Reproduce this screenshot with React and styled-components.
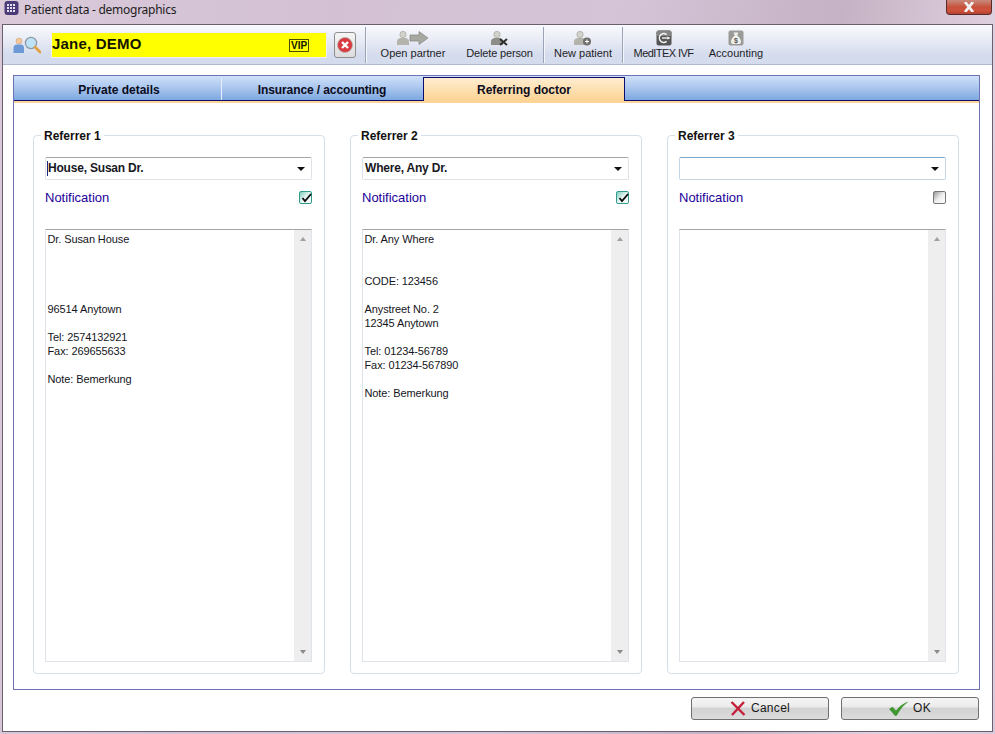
import styled, { createGlobalStyle } from "styled-components";

const GlobalStyle = createGlobalStyle`
  html, body {
    margin: 0;
    height: 100%;
    overflow: hidden;
  }
  body {
    background: linear-gradient(100deg, #d9c9d9 0%, #d3c1d3 30%, #d5c4d8 55%, #c5b2c4 75%, #e1d2e1 90%, #d9cadb 100%);
    font-family: "Liberation Sans", Arial, sans-serif;
  }
`;

const Frame = styled.div`
  width: 995px;
  height: 734px;
  display: flex;
  flex-direction: column;
  box-sizing: border-box;
  padding: 0 2px 2px 2px;
`;

const TitleBar = styled.div`
  height: 24px;
  flex: none;
  display: flex;
  align-items: flex-start;
  margin-left: 2px;
`;

const TitleText = styled.span`
  font-family: "Noto Sans", sans-serif;
  font-size: 12px;
  letter-spacing: -0.26px;
  line-height: 19px;
  margin-left: 4px;
  color: #1c1c22;
`;

const CloseBox = styled.div`
  margin-left: auto;
  width: 46px;
  height: 15px;
  margin-right: 1px;
  box-sizing: border-box;
  border: 1px solid #5b2a2a;
  border-top: none;
  border-radius: 0 0 4px 4px;
  background: linear-gradient(#c98a7c 0%, #c6523c 50%, #d0503a 75%, #b04434 100%);
  display: flex;
  align-items: center;
  justify-content: center;
`;

const Client = styled.div`
  flex: 1;
  display: flex;
  flex-direction: column;
  background: #fff;
  border: 1px solid #6a5f6c;
  min-height: 0;
`;

const Toolbar = styled.div`
  height: 40px;
  flex: none;
  box-sizing: border-box;
  display: flex;
  align-items: center;
  background: linear-gradient(#f9fafd 0%, #e6e9f4 45%, #d5dced 75%, #d4dbec 100%);
  border-bottom: 1px solid #b3bad0;
`;

const SearchSlot = styled.div`
  width: 48px;
  height: 26px;
  flex: none;
  display: flex;
  align-items: center;
  padding-left: 10px;
  box-sizing: border-box;
`;

const NameField = styled.div`
  width: 276px;
  height: 26px;
  flex: none;
  box-sizing: border-box;
  border: 1px solid #eef0f5;
  background: #ffff00;
  display: flex;
  align-items: center;
  justify-content: space-between;
  padding: 0 17px 2px 0;
  font-size: 15px;
  letter-spacing: 0.2px;
  font-weight: 700;
  color: #141400;
`;

const VipBadge = styled.span`
  border: 1px solid #4a4a00;
  font-size: 10px;
  font-weight: 700;
  letter-spacing: 0;
  line-height: 11px;
  padding: 0 1px;
  width: 16px;
  text-align: center;
  margin-top: 3px;
`;

const ClearButton = styled.div`
  width: 22px;
  height: 26px;
  flex: none;
  margin: 0 9px 0 7px;
  box-sizing: border-box;
  border: 1px solid #8d8d8d;
  border-radius: 3px;
  background: linear-gradient(#f6f6f6, #dcdcdc);
  display: flex;
  align-items: center;
  justify-content: center;
`;

const Sep = styled.div`
  width: 1px;
  height: 36px;
  flex: none;
  background: #9aa3b8;
  box-shadow: 1px 0 0 #f3f5fa;
`;

const ToolButton = styled.div`
  display: flex;
  flex-direction: column;
  align-items: center;
  flex: none;
  box-sizing: border-box;
  width: ${(p) => p.$w}px;
  padding-right: ${(p) => p.$pr || 0}px;
  font-size: 11px;
  letter-spacing: ${(p) => p.$ls || 0}px;
  color: #1e1e28;
  white-space: nowrap;
  line-height: 13px;

  svg {
    display: block;
    margin-bottom: 1px;
  }
`;

const Body = styled.div`
  flex: 1;
  min-height: 0;
  display: flex;
  flex-direction: column;
  padding: 10px 12px 0 10px;
`;

const TabFrame = styled.div`
  flex: none;
  height: 615px;
  box-sizing: border-box;
  border: 1px solid #6e72b2;
  display: flex;
  flex-direction: column;
`;

const TabStrip = styled.div`
  height: 25px;
  flex: none;
  box-sizing: border-box;
  display: flex;
  align-items: flex-end;
  background: linear-gradient(#d0e1f9 0%, #a9c6ee 50%, #7ea7e0 100%);
  border-bottom: 1px solid #0b0b70;
  box-shadow: 0 2px 0 #fdd49a;
`;

const Tab = styled.div`
  width: ${(p) => p.$w}px;
  flex: none;
  box-sizing: border-box;
  display: flex;
  align-items: center;
  justify-content: center;
  padding: ${(p) => (p.$active ? "0" : p.$last ? "2px 0 0 0" : "2px 0 0 3px")};
  font-size: 12px;
  letter-spacing: ${(p) => (p.$last ? "-0.1px" : "0")};
  font-weight: 700;
  color: #0c0c20;
  height: ${(p) => (p.$active ? "24px" : "22px")};
  border-right: 1px solid ${(p) => (p.$active ? "#0b0b70" : p.$last ? "transparent" : "#e6effb")};
  border-left: ${(p) => (p.$active ? "1px solid #0b0b70" : "none")};
  border-top: ${(p) => (p.$active ? "1px solid #0b0b70" : "none")};
  margin-bottom: ${(p) => (p.$active ? "-1px" : "0")};
  background: ${(p) => (p.$active ? "linear-gradient(#ffedd0, #fdd393)" : "transparent")};
  position: relative;
`;

const Panels = styled.div`
  flex: 1;
  min-height: 0;
  display: flex;
  gap: 25px;
  padding: 26px 19px 15px 19px;
`;

const Group = styled.fieldset`
  width: 292px;
  flex: none;
  margin: 0;
  padding: 14px 12px 11px 11px;
  box-sizing: border-box;
  border: 1px solid #d6e0ea;
  border-radius: 4px;
  display: flex;
  flex-direction: column;
  min-width: 0;

  legend {
    font-size: 12px;
    font-weight: 700;
    color: #111;
    padding: 2px 3px 0;
    margin-left: -4px;
    line-height: 14px;
  }
`;

const Combo = styled.div`
  height: 23px;
  flex: none;
  box-sizing: border-box;
  border: 1px solid ${(p) => (p.$empty ? "#c4d6e6" : "#dfe3e8")};
  border-top-color: ${(p) => (p.$empty ? "#7da7c9" : "#a6a6a6")};
  border-radius: 2px;
  display: flex;
  align-items: center;
  justify-content: space-between;
  padding: 0 6px 0 2px;
  font-size: 12px;
  letter-spacing: -0.2px;
  font-weight: 700;
  color: #18181f;
`;

const ComboText = styled.span`
  line-height: 15px;
  box-shadow: ${(p) => (p.$focus ? "-1px 0 0 #1a2a80" : "none")};
`;

const Caret = styled.span`
  width: 0;
  height: 0;
  border-left: 4px solid transparent;
  border-right: 4px solid transparent;
  border-top: 4px solid #111;
`;

const NotifyRow = styled.div`
  height: 35px;
  flex: none;
  display: flex;
  align-items: center;
  justify-content: space-between;
  font-size: 13px;
  color: #22009a;
  margin-bottom: 12px;
  padding: 0 0 2px 0;
`;

const Check = styled.div`
  width: 13px;
  height: 13px;
  box-sizing: border-box;
  border: 1px solid ${(p) => (p.$on ? "#2f9c8c" : "#777")};
  border-radius: 2px;
  background: ${(p) =>
    p.$on
      ? "linear-gradient(135deg, #7fcdbb 0%, #e8f6f2 50%, #fff 100%)"
      : "linear-gradient(135deg, #999 0%, #eee 50%, #fff 100%)"};
  position: relative;

  svg {
    position: absolute;
    left: 0;
    top: -1px;
  }
`;

const Memo = styled.div`
  flex: 1;
  min-height: 0;
  box-sizing: border-box;
  border: 1px solid #dfe4ea;
  border-top-color: #a4a4a4;
  display: flex;
`;

const MemoText = styled.div`
  flex: 1;
  padding: 2px 1.5px;
  font-size: 11px;
  letter-spacing: -0.1px;
  line-height: 14px;
  color: #15151c;
  white-space: pre-line;
`;

const ScrollBar = styled.div`
  width: 17px;
  flex: none;
  background: #eeeeee;
  display: flex;
  flex-direction: column;
  align-items: center;
  justify-content: space-between;
  padding: 7px 0;
  box-sizing: border-box;
`;

const ScrollArrow = styled.span`
  width: 0;
  height: 0;
  border-left: 3.5px solid transparent;
  border-right: 3.5px solid transparent;
  ${(p) => (p.$up ? "border-bottom: 4px solid #a0a0a0;" : "border-top: 4px solid #8a8a8a;")}
`;

const Footer = styled.div`
  flex: 1;
  display: flex;
  justify-content: flex-end;
  gap: 12px;
  padding: 7px 1px 0 0;
`;

const DlgButton = styled.div`
  width: 138px;
  height: 23px;
  box-sizing: border-box;
  border: 1px solid #6f6f6f;
  border-radius: 3px;
  background: linear-gradient(#f5f5f5 0%, #ececec 40%, #d2d2d2 50%, #dcdcdc 100%);
  display: flex;
  align-items: center;
  justify-content: center;
  gap: 5px;
  padding-bottom: 1px;
  font-size: 12px;
  letter-spacing: 0.3px;
  color: #1a1a1a;
`;

const Person = ({ x = 0, y = 0, fill = "#b4b4ac" }) => (
  <g transform={`translate(${x} ${y})`}>
    <circle cx="6" cy="3.5" r="3.2" fill="#d2d2ca" stroke="#94948c" strokeWidth="0.5" />
    <path d="M0 14 V10.5 Q0 7.5 3.5 7 H8.5 Q12 7.5 12 10.5 V14 Z" fill={fill} />
  </g>
);

const OpenPartnerIcon = () => (
  <svg width="32" height="16" viewBox="0 0 32 16">
    <Person y="1" />
    <path d="M13 5 H22 V1.5 L31 8 L22 14.5 V11 H13 Z" fill="#a8a8a2" stroke="#85857e" strokeWidth="0.7" />
  </svg>
);

const DeletePersonIcon = () => (
  <svg width="18" height="16" viewBox="0 0 18 16">
    <Person y="1" fill="#8e8e88" />
    <path d="M9 9 L16 15 M16 9 L9 15" stroke="#2f2f2f" strokeWidth="2" />
  </svg>
);

const NewPatientIcon = () => (
  <svg width="18" height="16" viewBox="0 0 18 16">
    <Person y="1" />
    <circle cx="13" cy="11.5" r="4" fill="#6f6f6b" />
    <path d="M13 9.5 V13.5 M11 11.5 H15" stroke="#fff" strokeWidth="1" />
  </svg>
);

const MeditexIcon = () => (
  <svg width="16" height="16" viewBox="0 0 16 16">
    <rect x="0.5" y="0.5" width="15" height="15" rx="2" fill="#555" />
    <path d="M0.5 6 H15.5 V2.5 Q15.5 0.5 13.5 0.5 H2.5 Q0.5 0.5 0.5 2.5 Z" fill="#858585" />
    <path d="M10.6 4.6 A4.4 4.4 0 1 0 10.6 11.4" fill="none" stroke="#f4f4f4" strokeWidth="1.5" />
    <path d="M6 8 H13.5" stroke="#f4f4f4" strokeWidth="1.4" />
    <path d="M11.5 6.2 L14 8 L11.5 9.8 Z" fill="#f4f4f4" />
  </svg>
);

const AccountingIcon = () => (
  <svg width="16" height="16" viewBox="0 0 16 16">
    <rect x="0.5" y="0.5" width="15" height="15" rx="2" fill="#9a9a96" />
    <path d="M5.5 2.5 H10.5 L9.2 5.5 Q13 8.5 13 12 Q13 14 11 14 H5 Q3 14 3 12 Q3 8.5 6.8 5.5 Z" fill="#f0f0ec" />
    <text x="8" y="12.5" fontSize="7" fontWeight="700" textAnchor="middle" fill="#555" fontFamily="Liberation Sans">$</text>
  </svg>
);

const AppIcon = () => (
  <svg width="16" height="16" viewBox="0 0 16 16">
    <rect x="0.5" y="1" width="14" height="14" rx="3" fill="#4b3a78" />
    {[4, 7, 10].map((x) =>
      [5, 8, 11].map((y) => <rect key={`${x}-${y}`} x={x - 1} y={y - 1} width="2" height="2" fill="#e6e0f0" />)
    )}
  </svg>
);

const SearchIcon = () => (
  <svg width="28" height="18" viewBox="0 0 28 18">
    <circle cx="6" cy="5" r="3" fill="#f3c79a" stroke="#c79a70" strokeWidth="0.5" />
    <path d="M0.5 17 V12 Q0.5 8.5 4 8.5 H8 Q11 8.5 11 12 V17 Z" fill="#6d9ad6" />
    <circle cx="18" cy="7" r="5.6" fill="#bfe3f6" stroke="#8d9aa4" strokeWidth="1.3" />
    <path d="M22 11 L27 16" stroke="#e0a040" strokeWidth="2.6" strokeLinecap="round" />
  </svg>
);

const ClearIcon = () => (
  <svg width="16" height="16" viewBox="0 0 16 16">
    <circle cx="8" cy="8" r="7.5" fill="#d93a3f" stroke="#b8b0b0" strokeWidth="0.8" />
    <path d="M5 5 L11 11 M11 5 L5 11" stroke="#fff" strokeWidth="2.4" />
  </svg>
);

const CancelIcon = () => (
  <svg width="16" height="15" viewBox="0 0 16 15">
    <path d="M1.5 1 L14.5 14 M14 1 L2 14" stroke="#c4203a" strokeWidth="2.4" />
  </svg>
);

const OkIcon = () => (
  <svg width="19" height="15" viewBox="0 0 19 15">
    <path d="M0.5 8 L3.5 6 L7 10 Q11 4 18.5 1 Q12 6 7.5 14.5 H6 Z" fill="#3b9a2a" stroke="#2d7a20" strokeWidth="0.4" />
  </svg>
);

const WhiteX = () => (
  <svg width="12" height="10" viewBox="0 0 12 10">
    <path d="M2 0 L10 10 M10 0 L2 10" stroke="#f2f2f2" strokeWidth="2.8" fill="none" />
  </svg>
);

const referrers = [
  {
    title: "Referrer 1",
    name: "House, Susan Dr.",
    focus: true,
    on: true,
    memo: "Dr. Susan House\n\n\n\n\n96514 Anytown\n\nTel: 2574132921\nFax: 269655633\n\nNote: Bemerkung",
  },
  {
    title: "Referrer 2",
    name: "Where, Any Dr.",
    on: true,
    memo: "Dr. Any Where\n\n\nCODE: 123456\n\nAnystreet No. 2\n12345 Anytown\n\nTel: 01234-56789\nFax: 01234-567890\n\nNote: Bemerkung",
  },
  { title: "Referrer 3", name: "", on: false, memo: "" },
];

export default function App() {
  return (
    <>
      <GlobalStyle />
      <Frame>
        <TitleBar>
          <AppIcon />
          <TitleText>Patient data - demographics</TitleText>
          <CloseBox>
            <WhiteX />
          </CloseBox>
        </TitleBar>
        <Client>
          <Toolbar>
            <SearchSlot>
              <SearchIcon />
            </SearchSlot>
            <NameField>
              Jane, DEMO
              <VipBadge>VIP</VipBadge>
            </NameField>
            <ClearButton>
              <ClearIcon />
            </ClearButton>
            <Sep />
            <ToolButton $w={94}>
              <OpenPartnerIcon />
              Open partner
            </ToolButton>
            <ToolButton $w={83} $pr={4} $ls={-0.15}>
              <DeletePersonIcon />
              Delete person
            </ToolButton>
            <Sep />
            <ToolButton $w={78}>
              <NewPatientIcon />
              New patient
            </ToolButton>
            <Sep />
            <ToolButton $w={81} $ls={-0.55}>
              <MeditexIcon />
              MedITEX IVF
            </ToolButton>
            <ToolButton $w={64}>
              <AccountingIcon />
              Accounting
            </ToolButton>
          </Toolbar>
          <Body>
            <TabFrame>
              <TabStrip>
                <Tab $w={208}>Private details</Tab>
                <Tab $w={201} $last>
                  Insurance / accounting
                </Tab>
                <Tab $w={202} $active>
                  Referring doctor
                </Tab>
              </TabStrip>
              <Panels>
                {referrers.map((r) => (
                  <Group key={r.title}>
                    <legend>{r.title}</legend>
                    <Combo $empty={!r.name}>
                      <ComboText $focus={r.focus}>{r.name}</ComboText>
                      <Caret />
                    </Combo>
                    <NotifyRow>
                      Notification
                      <Check $on={r.on}>
                        {r.on && (
                          <svg width="13" height="13" viewBox="0 0 13 13">
                            <path d="M2.5 7 L5 10 L11 3" fill="none" stroke="#0c0c0c" strokeWidth="1.8" />
                          </svg>
                        )}
                      </Check>
                    </NotifyRow>
                    <Memo>
                      <MemoText>{r.memo}</MemoText>
                      <ScrollBar>
                        <ScrollArrow $up />
                        <ScrollArrow />
                      </ScrollBar>
                    </Memo>
                  </Group>
                ))}
              </Panels>
            </TabFrame>
            <Footer>
              <DlgButton>
                <CancelIcon />
                Cancel
              </DlgButton>
              <DlgButton>
                <OkIcon />
                OK
              </DlgButton>
            </Footer>
          </Body>
        </Client>
      </Frame>
    </>
  );
}
